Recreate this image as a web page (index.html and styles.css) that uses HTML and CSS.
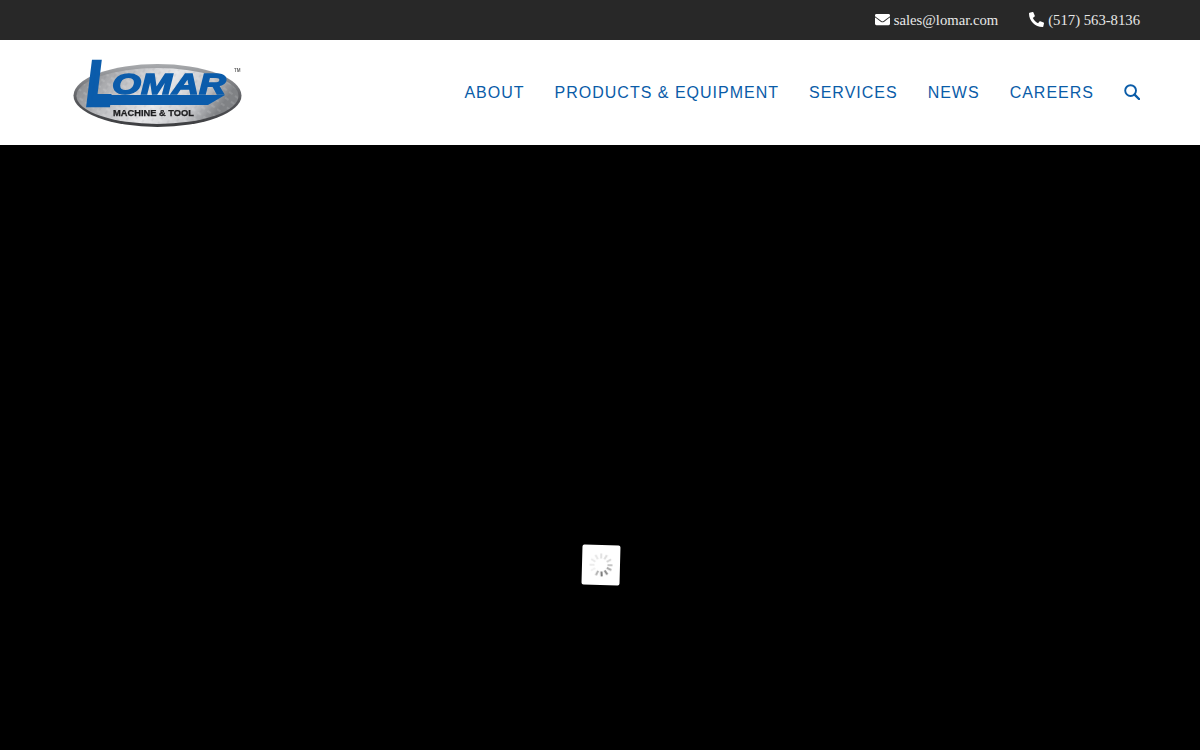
FILE: index.html
```html
<!DOCTYPE html>
<html lang="en">
<head>
  <meta charset="UTF-8" />
  <meta name="viewport" content="width=device-width, initial-scale=1" />
  <title>Lomar Machine &amp; Tool</title>
  <link rel="stylesheet" href="styles.css">
</head>
<body>
  <div class="topbar">
    <a class="top-link" href="#">
      <svg class="top-icon" viewBox="0 0 512 512"><path d="M502.3 190.8c3.9-3.1 9.7-.2 9.7 4.7V400c0 26.5-21.5 48-48 48H48c-26.5 0-48-21.5-48-48V195.6c0-5 5.7-7.8 9.7-4.7 22.4 17.4 52.1 39.5 154.1 113.6 21.1 15.4 56.7 47.8 92.2 47.6 35.7.3 72-32.8 92.3-47.6 102-74.1 131.6-96.3 154-113.7zM256 320c23.2.4 56.6-29.2 73.4-41.4 132.7-96.3 142.8-104.7 173.4-128.7 5.8-4.5 9.2-11.5 9.2-18.9v-19c0-26.5-21.5-48-48-48H48C21.5 64 0 85.5 0 112v19c0 7.4 3.4 14.3 9.2 18.9 30.6 23.9 40.7 32.4 173.4 128.7 16.8 12.2 50.2 41.8 73.4 41.4z"/></svg>
      sales@lomar.com
    </a>
    <a class="top-link" href="#">
      <svg class="top-icon flip" viewBox="0 0 512 512"><path d="M493.4 24.6l-104-24c-11.3-2.6-22.9 3.3-27.5 13.9l-48 112c-4.2 9.8-1.4 21.3 6.9 28l60.6 49.6c-36 76.7-98.9 140.5-177.2 177.2l-49.6-60.6c-6.8-8.3-18.2-11.1-28-6.9l-112 48C3.9 366.5-2 378.1.6 389.4l24 104C27.1 504.2 36.7 512 48 512c256.1 0 464-207.5 464-464 0-11.2-7.7-20.9-18.6-23.4z"/></svg>
      (517) 563-8136
    </a>
  </div>

  <header class="header">
    <a class="logo" href="#">
      <svg class="logo-svg" width="170" height="72" viewBox="0 0 170 72">
        <defs>
          <linearGradient id="plate" x1="0" y1="0" x2="1" y2="0.25">
            <stop offset="0" stop-color="#77797c"/>
            <stop offset="0.3" stop-color="#b9babd"/>
            <stop offset="0.6" stop-color="#e6e6e8"/>
            <stop offset="0.85" stop-color="#c4c5c8"/>
            <stop offset="1" stop-color="#808285"/>
          </linearGradient>
          <linearGradient id="rim" x1="0" y1="0" x2="0" y2="1">
            <stop offset="0" stop-color="#a9abae"/>
            <stop offset="0.6" stop-color="#55565a"/>
            <stop offset="1" stop-color="#3c3d40"/>
          </linearGradient>
          <pattern id="tread" width="7" height="7" patternUnits="userSpaceOnUse" patternTransform="rotate(35)">
            <line x1="1" y1="2" x2="5" y2="2" stroke="#ffffff" stroke-opacity="0.3" stroke-width="0.8"/>
            <line x1="3" y1="4" x2="3" y2="7" stroke="#77797c" stroke-opacity="0.25" stroke-width="0.8"/>
          </pattern>
        </defs>
        <g class="soft">
          <ellipse cx="84.5" cy="38.5" rx="84" ry="31.5" fill="url(#rim)"/>
          <ellipse cx="84.5" cy="39" rx="81" ry="28" fill="url(#plate)"/>
          <ellipse cx="84.5" cy="39" rx="81" ry="28" fill="url(#tread)"/>
          <polygon points="17,38 152,38 135,48 15,48" fill="#0b5cab"/>
          <text class="logo-l" transform="translate(15 47) scale(0.95 1.5)">L</text>
          <text class="logo-name" x="39" y="37" textLength="114" lengthAdjust="spacingAndGlyphs">OMAR</text>
          <text class="logo-sub" x="40" y="58.5" textLength="81" lengthAdjust="spacingAndGlyphs">MACHINE &amp; TOOL</text>
          <text class="logo-tm" x="161" y="15">TM</text>
        </g>
      </svg>
    </a>
    <nav class="nav">
      <a href="#">ABOUT</a>
      <a href="#">PRODUCTS &amp; EQUIPMENT</a>
      <a href="#">SERVICES</a>
      <a href="#">NEWS</a>
      <a href="#">CAREERS</a>
      <a class="search" href="#">
        <svg width="16" height="16" viewBox="0 0 16 16"><circle cx="6.6" cy="6.6" r="5.4" fill="none" stroke="#0a5ca8" stroke-width="1.9"/><line x1="10.6" y1="10.6" x2="15" y2="15" stroke="#0a5ca8" stroke-width="2.4" stroke-linecap="round"/></svg>
      </a>
    </nav>
  </header>

  <main class="hero">
    <div class="loader">
      <svg class="spinner" width="26" height="26" viewBox="0 0 26 26">
        <g stroke-width="2" stroke-linecap="butt">
          <line x1="13" y1="1.5" x2="13" y2="6.5" stroke="#e2e2e2"/>
          <line x1="13" y1="1.5" x2="13" y2="6.5" stroke="#dcdcdc" transform="rotate(30 13 13)"/>
          <line x1="13" y1="1.5" x2="13" y2="6.5" stroke="#d2d2d2" transform="rotate(60 13 13)"/>
          <line x1="13" y1="1.5" x2="13" y2="6.5" stroke="#c4c4c4" transform="rotate(90 13 13)"/>
          <line x1="13" y1="1.5" x2="13" y2="6.5" stroke="#a8a8a8" transform="rotate(115 13 13)"/>
          <line x1="13" y1="1.5" x2="13" y2="6.5" stroke="#8a8a8a" transform="rotate(145 13 13)"/>
          <line x1="13" y1="1.5" x2="13" y2="6.5" stroke="#777" transform="rotate(175 13 13)"/>
          <line x1="13" y1="1.5" x2="13" y2="6.5" stroke="#b0b0b0" transform="rotate(205 13 13)"/>
          <line x1="13" y1="1.5" x2="13" y2="6.5" stroke="#f0f0f0" transform="rotate(240 13 13)"/>
          <line x1="13" y1="1.5" x2="13" y2="6.5" stroke="#ececec" transform="rotate(270 13 13)"/>
          <line x1="13" y1="1.5" x2="13" y2="6.5" stroke="#e8e8e8" transform="rotate(300 13 13)"/>
          <line x1="13" y1="1.5" x2="13" y2="6.5" stroke="#e6e6e6" transform="rotate(330 13 13)"/>
        </g>
      </svg>
    </div>
  </main>
</body>
</html>
```
FILE: styles.css
```css
* { box-sizing: border-box; }

html, body {
  height: 100%;
}

body {
  margin: 0;
  display: flex;
  flex-direction: column;
  background: #000;
  overflow: hidden;
}

a {
  text-decoration: none;
}

.topbar {
  height: 40px;
  flex: none;
  display: flex;
  justify-content: flex-end;
  align-items: center;
  gap: 31px;
  padding-right: 60px;
  background: #282828;
}

.top-link {
  display: flex;
  align-items: center;
  gap: 4px;
  color: #e8e8e8;
  font-family: "Liberation Serif", serif;
  font-size: 14.7px;
}

.top-icon {
  width: 15px;
  height: 15px;
  fill: #fff;
  margin-top: -1px;
}

.flip {
  transform: scaleX(-1);
}

.header {
  height: 105px;
  flex: none;
  display: flex;
  justify-content: space-between;
  align-items: center;
  padding: 0 60px 0 73px;
  background: #fff;
}

.logo {
  display: block;
  height: 72px;
  margin-top: 1px;
}

.logo-svg {
  display: block;
  overflow: visible;
}

.soft {
  filter: blur(0.35px);
}

.logo text {
  font-family: "Liberation Sans", sans-serif;
  font-weight: 700;
  font-style: italic;
}

.logo-l {
  font-size: 40px;
  fill: #0b5cab;
  stroke: #0b5cab;
  stroke-width: 4.5px;
}

.logo-name {
  font-size: 29px;
  fill: #0b5cab;
  stroke: #0b5cab;
  stroke-width: 1.4px;
}

.logo .logo-sub {
  font-size: 8.5px;
  font-style: normal;
  fill: #1c1c1e;
  stroke: #1c1c1e;
  stroke-width: 0.25px;
}

.logo .logo-tm {
  font-size: 4.5px;
  font-style: normal;
  fill: #666;
}

.nav {
  display: flex;
  align-items: center;
  gap: 30px;
}

.nav a {
  color: #0a5ca8;
  font-family: "Liberation Sans", sans-serif;
  font-size: 16px;
  letter-spacing: 1px;
}

.nav .search {
  display: flex;
  margin-top: -1px;
}

.hero {
  flex: 1;
  position: relative;
  background: #000;
}

.loader {
  position: absolute;
  left: 582px;
  top: 400px;
  width: 38px;
  height: 40px;
  display: flex;
  align-items: center;
  justify-content: center;
  background: #fff;
  border-radius: 2px;
  transform: rotate(1.5deg);
}

.spinner {
  filter: blur(0.3px);
}
```
